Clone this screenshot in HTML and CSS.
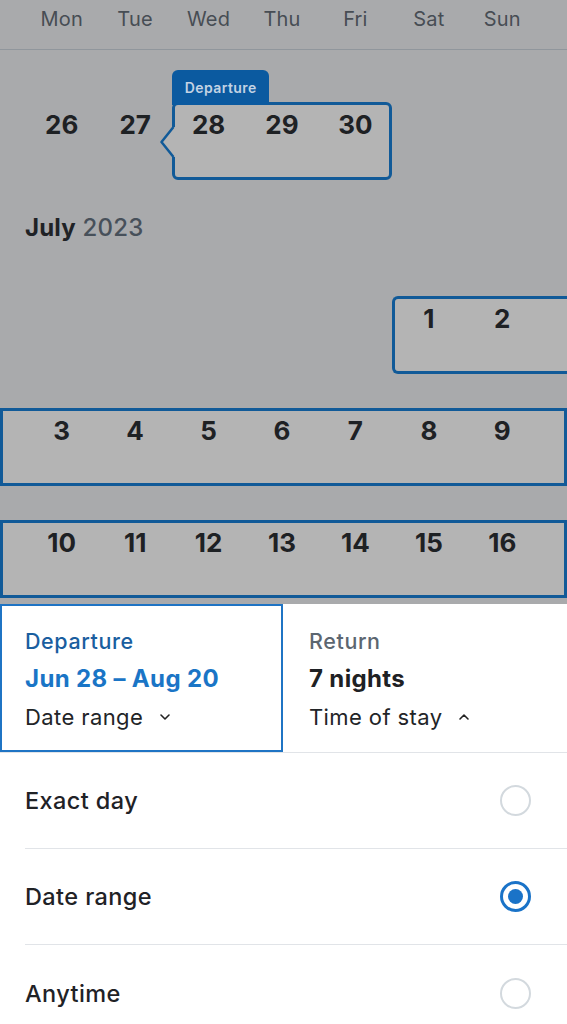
FILE: index.html
```html
<!DOCTYPE html>
<html lang="en">
<head>
<meta charset="utf-8">
<title>Dates</title>
<link rel="stylesheet" href="styles.css">
</head>
<body>
<div class="calendar">
  <div class="weekdays">
    <span class="c1">Mon</span><span class="c2">Tue</span><span class="c3">Wed</span><span class="c4">Thu</span><span class="c5">Fri</span><span class="c6">Sat</span><span class="c7">Sun</span>
  </div>

  <div class="week first">
    <div class="range range-mid">
      <span class="range-tag">Departure</span>
      <svg class="notch" width="17" height="30" viewBox="0 0 17 30" aria-hidden="true">
        <polygon points="13.5,0 1.5,15 13.5,30 17,30 17,0" fill="#b4b4b4"/>
        <polyline points="13.5,0 1.5,15 13.5,30" fill="none" stroke="#115a98" stroke-width="2.5" stroke-linejoin="round"/>
      </svg>
    </div>
    <span class="day c1">26</span><span class="day c2">27</span><span class="day c3">28</span><span class="day c4">29</span><span class="day c5">30</span>
  </div>

  <h2 class="month"><b>July</b> 2023</h2>

  <div class="week">
    <div class="range range-end"></div>
    <span class="day c6">1</span><span class="day c7">2</span>
  </div>

  <div class="week">
    <div class="range range-full"></div>
    <span class="day c1">3</span><span class="day c2">4</span><span class="day c3">5</span><span class="day c4">6</span><span class="day c5">7</span><span class="day c6">8</span><span class="day c7">9</span>
  </div>

  <div class="week">
    <div class="range range-full"></div>
    <span class="day c1">10</span><span class="day c2">11</span><span class="day c3">12</span><span class="day c4">13</span><span class="day c5">14</span><span class="day c6">15</span><span class="day c7">16</span>
  </div>
</div>

<div class="panel">
  <div class="tabs">
    <div class="tab active">
      <div class="tab-label">Departure</div>
      <div class="tab-value">Jun 28 – Aug 20</div>
      <div class="tab-sub">Date range
        <svg class="chev" width="12" height="8" viewBox="0 0 12 8" aria-hidden="true"><polyline points="2,2 6,6 10,2" fill="none" stroke="#222" stroke-width="1.6" stroke-linecap="round" stroke-linejoin="round"/></svg>
      </div>
    </div>
    <div class="tab">
      <div class="tab-label muted">Return</div>
      <div class="tab-value dark">7 nights</div>
      <div class="tab-sub">Time of stay
        <svg class="chev" width="12" height="8" viewBox="0 0 12 8" aria-hidden="true"><polyline points="2,6 6,2 10,6" fill="none" stroke="#222" stroke-width="1.6" stroke-linecap="round" stroke-linejoin="round"/></svg>
      </div>
    </div>
  </div>

  <div class="options">
    <div class="option">
      <span>Exact day</span>
      <span class="radio"></span>
    </div>
    <div class="option">
      <span>Date range</span>
      <span class="radio checked"></span>
    </div>
    <div class="option">
      <span>Anytime</span>
      <span class="radio"></span>
    </div>
  </div>
</div>
</body>
</html>
```

FILE: styles.css
```css
* { box-sizing: border-box; }

html, body {
  margin: 0;
  padding: 0;
  background: #ffffff;
}

body {
  width: 567px;
  height: 1024px;
  overflow: hidden;
  font-family: Inter, "Noto Sans", "Liberation Sans", sans-serif;
  color: #1f2226;
}

.calendar {
  height: 604px;
  overflow: hidden;
  background: #a9aaac;
}

.weekdays,
.week {
  display: grid;
  grid-template-columns: 25px repeat(7, 1fr) 28px;
}

.weekdays {
  height: 50px;
  border-bottom: 1px solid #90969c;
  padding-top: 7px;
  font-size: 20px;
  line-height: 24px;
  letter-spacing: 0.2px;
  color: #474d54;
}

.weekdays span { text-align: center; }

.c1 { grid-column: 2; }
.c2 { grid-column: 3; }
.c3 { grid-column: 4; }
.c4 { grid-column: 5; }
.c5 { grid-column: 6; }
.c6 { grid-column: 7; }
.c7 { grid-column: 8; }

.week {
  height: 78px;
  margin-bottom: 34px;
}

.week.first { margin-top: 52px; }

.week > * { grid-row: 1; }

.range {
  position: relative;
  background: #b4b4b4;
  border: 3px solid #115a98;
}

.range-mid {
  grid-column: 4 / 7;
  border-radius: 6px;
}

.range-end {
  grid-column: 7 / 10;
  border-right: 0;
  border-radius: 6px 0 0 6px;
}

.range-full {
  grid-column: 1 / 10;
}

.range-tag {
  position: absolute;
  left: -3px;
  bottom: 100%;
  width: 97px;
  height: 35px;
  padding-left: 13px;
  background: #0b5aa0;
  border-radius: 6px 6px 0 0;
  color: #c3d3e4;
  font-size: 14px;
  font-weight: 600;
  letter-spacing: 0.4px;
  line-height: 35px;
}

.notch {
  position: absolute;
  left: -15px;
  top: 22px;
  display: block;
}

.day {
  position: relative;
  align-self: start;
  padding-top: 8px;
  text-align: center;
  font-size: 26px;
  line-height: 30px;
  font-weight: 700;
  color: #1e2124;
}

.month {
  margin: 0 0 54px;
  padding-left: 25px;
  font-size: 24px;
  line-height: 28px;
  font-weight: 500;
  letter-spacing: 0.2px;
  color: #47505a;
}

.month b {
  font-weight: 700;
  color: #1f2226;
}

.panel { background: #ffffff; }

.tabs {
  display: grid;
  grid-template-columns: 283px 1fr;
  height: 149px;
  border-bottom: 1px solid #e1e4e8;
}

.tab {
  padding: 18px 0 0 26px;
}

.tab.active {
  border: 2px solid #1f74c4;
  padding: 16px 0 0 23px;
}

.tab-label {
  font-size: 21.5px;
  line-height: 38px;
  font-weight: 500;
  letter-spacing: 0.6px;
  color: #1a5e9f;
}

.tab-label.muted { color: #5c6670; }

.tab-value {
  font-size: 24px;
  line-height: 38px;
  font-weight: 700;
  letter-spacing: 0.35px;
  color: #1a75c6;
}

.tab-value.dark { color: #1e2124; }

.tab-sub {
  display: flex;
  align-items: center;
  gap: 16px;
  font-size: 22px;
  line-height: 38px;
  letter-spacing: 0.4px;
  color: #222427;
}

.chev { display: block; }

.options { padding-left: 25px; }

.option {
  display: flex;
  align-items: center;
  justify-content: space-between;
  height: 96px;
  padding-right: 36px;
  border-bottom: 1px solid #e1e4e8;
  font-size: 23.5px;
  font-weight: 500;
  letter-spacing: 0.4px;
  color: #1f2226;
}

.option:last-child { border-bottom: 0; }

.radio {
  width: 31px;
  height: 31px;
  border-radius: 50%;
  border: 2px solid #d3d9de;
  display: flex;
  align-items: center;
  justify-content: center;
}

.radio.checked {
  border: 3px solid #1a73c8;
}

.radio.checked::after {
  content: "";
  width: 15px;
  height: 15px;
  border-radius: 50%;
  background: #1a73c8;
}
```
